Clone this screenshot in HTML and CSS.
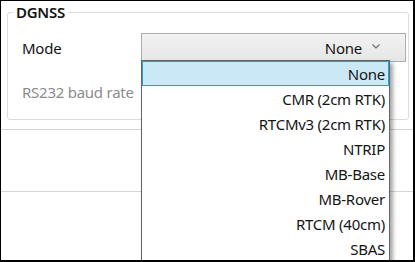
FILE: index.html
```html
<!DOCTYPE html>
<html lang="en">
<head>
  <meta charset="UTF-8">
  <title>DGNSS</title>
  <link rel="stylesheet" href="styles.css">
</head>
<body>

<div class="window">
  <div class="group">
    <div class="group-title">DGNSS</div>
    <div class="row">
      <span class="label">Mode</span>
      <div class="combo">
        <span>None</span>
        <svg class="chevron" width="8" height="5" viewBox="0 0 8 5">
          <path d="M0.5 0.5 L4 4 L7.5 0.5" fill="none" stroke="#707070" stroke-width="1.2"/>
        </svg>
      </div>
    </div>
    <div class="row">
      <span class="label disabled">RS232 baud rate</span>
    </div>
  </div>

  <div class="section"></div>
  <div class="section"></div>

  <ul class="dropdown">
    <li class="selected">None</li>
    <li>CMR (2cm RTK)</li>
    <li>RTCMv3 (2cm RTK)</li>
    <li>NTRIP</li>
    <li>MB-Base</li>
    <li>MB-Rover</li>
    <li>RTCM (40cm)</li>
    <li>SBAS</li>
  </ul>
</div>

</body>
</html>
```

FILE: styles.css
```css
body {
  margin: 0;
  padding: 0;
  background: #fff;
}
.window {
  position: relative;
  width: 412px;
  height: 259px;
  border-style: solid;
  border-color: #000;
  border-width: 1px 2px 2px 1px;
  background: #fff;
  overflow: hidden;
  font-family: "Noto Sans", "Open Sans", sans-serif;
  font-size: 15px;
  letter-spacing: -0.25px;
  color: #141414;
}
.group {
  margin: 11px 4px 0 6px;
  height: 106px;
  border: 1px solid #dcdcdc;
  border-radius: 3px;
  padding: 0 2px 0 14px;
}
.group-title {
  display: inline-block;
  margin: -11px 0 0 -9px;
  padding: 0 3px;
  background: #fff;
  font-weight: 600;
  line-height: 20px;
  vertical-align: top;
}
.row {
  display: flex;
  align-items: center;
  height: 29px;
}
.row + .row {
  margin-top: 15px;
}
.label {
  width: 119px;
}
.label.disabled {
  color: #8c8c8c;
}
.combo {
  flex: 1;
  height: 27px;
  display: flex;
  align-items: center;
  justify-content: flex-end;
  gap: 10px;
  padding-right: 25px;
  border: 1px solid #adadad;
  background: linear-gradient(#f2f2f2, #e6e6e6);
}
.chevron {
  margin-top: -3px;
}
.section {
  height: 61px;
  border-top: 1px solid #d6d6d6;
  margin-top: 9px;
}
.section + .section {
  margin-top: 0;
}
.dropdown {
  position: absolute;
  left: 140px;
  top: 59px;
  width: 247px;
  height: 260px;
  margin: 0;
  padding: 0;
  list-style: none;
  background: #fff;
  border: 1px solid #646464;
  box-shadow: 3px 3px 4px rgba(0,0,0,0.35);
}
.dropdown li {
  height: 25px;
  line-height: 24px;
  text-align: right;
  padding-right: 3px;
  border: 1px solid transparent;
  box-sizing: border-box;
}
.dropdown li.selected {
  background: #cbe8f6;
  border-color: #26a0da;
}
```
